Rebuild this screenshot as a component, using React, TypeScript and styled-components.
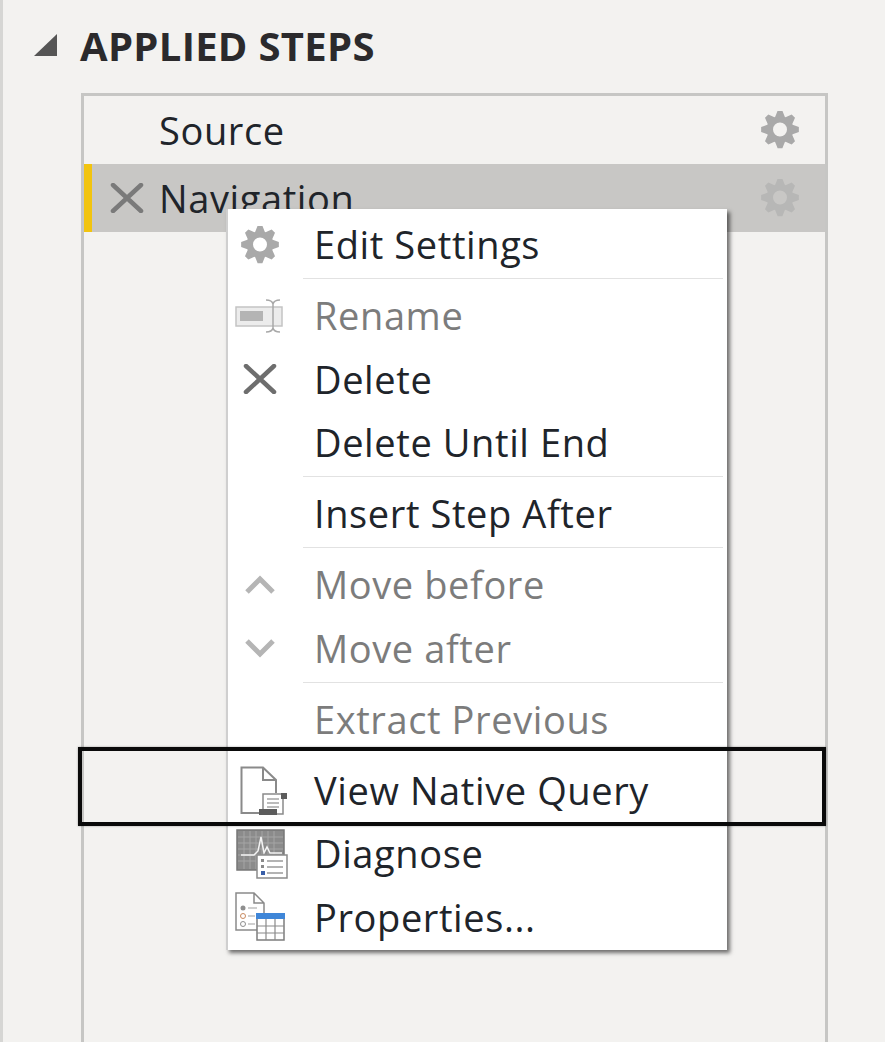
import React from 'react';
import styled, { createGlobalStyle } from 'styled-components';

const GlobalStyle = createGlobalStyle`
  html, body {
    margin: 0;
    padding: 0;
    background: #f3f2f0;
  }
  body {
    font-family: 'Open Sans', 'Noto Sans', 'Liberation Sans', sans-serif;
  }
`;

const Panel = styled.div`
  position: relative;
  box-sizing: border-box;
  width: 885px;
  height: 1042px;
  overflow: hidden;
  border-left: 3px solid #d6d6d4;
  background: #f3f2f0;
  display: flex;
  flex-direction: column;
`;

const Header = styled.div`
  display: flex;
  align-items: center;
  height: 46px;
  margin-top: 23px;
  padding-left: 30px;
  gap: 22px;
`;

const Title = styled.h2`
  margin: 0;
  font-size: 40px;
  line-height: 46px;
  font-weight: 700;
  letter-spacing: 0.3px;
  color: #2b2a2c;
`;

const StepsBox = styled.div`
  position: relative;
  box-sizing: border-box;
  flex: 1;
  margin: 24px 57px 0 78px;
  border: 3px solid #c6c6c4;
  border-bottom: 0;
`;

const StepRow = styled.div<{ $active?: boolean }>`
  box-sizing: border-box;
  height: 68px;
  display: flex;
  align-items: center;
  padding-left: ${(p) => (p.$active ? '17px' : '25px')};
  padding-right: 26px;
  background: ${(p) => (p.$active ? '#c8c7c5' : 'transparent')};
  border-left: ${(p) => (p.$active ? '8px solid #f2c40f' : '0')};
`;

const StepIcon = styled.div`
  width: 50px;
  display: flex;
  align-items: center;
`;

const StepLabel = styled.span`
  flex: 1;
  font-size: 38px;
  line-height: 68px;
  letter-spacing: 0.6px;
  color: #20242a;
`;

const Menu = styled.div`
  position: absolute;
  left: 142px;
  top: 113px;
  box-sizing: border-box;
  width: 501px;
  padding: 4px 0 0;
  height: 741px;
  background: #ffffff;
  border-left: 2px solid #cfcfcf;
  box-shadow: 3px 3px 4px rgba(0, 0, 0, 0.55);
`;

const MenuRow = styled.div`
  height: 63.25px;
  display: flex;
  align-items: center;
`;

const MenuIcon = styled.div`
  width: 86px;
  flex: none;
  display: flex;
  justify-content: center;
  padding-right: 22px;
  box-sizing: border-box;
`;

const MenuLabel = styled.span<{ $disabled?: boolean }>`
  font-size: 38px;
  line-height: 63px;
  letter-spacing: 0.6px;
  white-space: nowrap;
  color: ${(p) => (p.$disabled ? '#7c7c7c' : '#20242a')};
`;

const Separator = styled.div<{ $hidden?: boolean }>`
  height: 1px;
  margin: 2px 4px 5px 75px;
  background: ${(p) => (p.$hidden ? 'transparent' : '#e2e2e2')};
`;

const Highlight = styled.div`
  position: absolute;
  left: 75px;
  top: 747px;
  box-sizing: border-box;
  width: 748px;
  height: 79px;
  border: 4px solid #0a0a0a;
  box-shadow: 0 0 2px rgba(0, 0, 0, 0.35);
`;

// builds an 8 tooth cog outline, hole is cut with evenodd
const gearPath = (cx: number, cy: number, outer: number, root: number, hole: number): string => {
  const pts: string[] = [];
  const teeth = 8;
  for (let i = 0; i < teeth; i += 1) {
    const a = (i * Math.PI * 2) / teeth - Math.PI / 2;
    const step = Math.PI / teeth;
    const list: [number, number][] = [
      [a - step * 0.92, root],
      [a - step * 0.32, outer],
      [a + step * 0.32, outer],
      [a + step * 0.92, root],
    ];
    list.forEach(([ang, r]) => {
      pts.push(`${(cx + Math.cos(ang) * r).toFixed(2)} ${(cy + Math.sin(ang) * r).toFixed(2)}`);
    });
  }
  const ring = `M${cx - hole} ${cy}a${hole} ${hole} 0 1 0 ${hole * 2} 0a${hole} ${hole} 0 1 0 ${-hole * 2} 0Z`;
  return `M${pts.join('L')}Z${ring}`;
};

const Gear = ({ color }: { color: string }) => (
  <svg width="38" height="38" viewBox="0 0 38 38">
    <path d={gearPath(19, 18.5, 19, 13.5, 7)} fill={color} fillRule="evenodd" />
  </svg>
);

const Cross = ({ color }: { color: string }) => (
  <svg width="36" height="30" viewBox="0 0 36 30">
    <path d="M4 2 L32 28 M32 2 L4 28" stroke={color} strokeWidth="4.5" strokeLinecap="round" fill="none" />
  </svg>
);

const Triangle = () => (
  <svg width="25" height="25" viewBox="0 0 25 25">
    <path d="M24 0 V22 H1 Z" fill="#555555" />
  </svg>
);

const RenameIcon = () => (
  <svg width="50" height="34" viewBox="0 0 50 34">
    <rect x="1" y="8" width="46" height="19" fill="#ececec" stroke="#c4c4c4" strokeWidth="1.5" />
    <rect x="5" y="12" width="23" height="10" fill="#b4b4b4" />
    <path d="M31 1 Q37 1 38 5 Q39 1 45 1 M38 5 V29 M31 33 Q37 33 38 29 Q39 33 45 33" stroke="#a8a8a8" strokeWidth="1.5" fill="none" />
  </svg>
);

const ChevronUp = () => (
  <svg width="32" height="22" viewBox="0 0 32 22">
    <path d="M3 18 L16 5 L29 18" stroke="#b5b5b5" strokeWidth="5" fill="none" />
  </svg>
);

const ChevronDown = () => (
  <svg width="32" height="22" viewBox="0 0 32 22">
    <path d="M3 4 L16 17 L29 4" stroke="#b5b5b5" strokeWidth="5" fill="none" />
  </svg>
);

const NativeQueryIcon = () => (
  <svg width="56" height="50" viewBox="-8 0 56 50">
    <path d="M21 47 H1.5 V1.5 H23 L36 14 V27 M23 1.5 V14 H36" stroke="#8a8a8a" strokeWidth="2" fill="none" />
    <rect x="23" y="28" width="20" height="20" fill="#fff" stroke="#8a8a8a" strokeWidth="1.5" />
    <path d="M27 33 H39 M27 37 H39 M27 41 H39" stroke="#a5a5a5" strokeWidth="1.5" />
    <rect x="19" y="43" width="18" height="6" fill="#5c5c5c" />
    <rect x="41" y="27" width="6" height="6" fill="#5c5c5c" />
  </svg>
);

const DiagnoseIcon = () => (
  <svg width="56" height="50" viewBox="-4 0 56 50">
    <rect x="1" y="1" width="47" height="40" fill="#8b8b8b" stroke="#777" strokeWidth="1.5" />
    <path d="M2 8 H47 M2 14 H47 M2 20 H47 M2 26 H47 M2 32 H47 M8 2 V40 M14 2 V40 M20 2 V40 M26 2 V40 M32 2 V40 M38 2 V40" stroke="#a5a5a5" strokeWidth="1" />
    <path d="M5 26 H18 L22 22 L25 8 L28 24 L31 18 L34 24 H46" stroke="#f4f4f4" strokeWidth="1.5" fill="none" />
    <rect x="21" y="26" width="30" height="23" fill="#fff" stroke="#8a8a8a" strokeWidth="1.5" />
    <path d="M31 32 H47 M31 38 H47 M31 44 H47" stroke="#9a9a9a" strokeWidth="1.5" />
    <rect x="25" y="30" width="3" height="3" fill="#8a8a8a" />
    <rect x="25" y="36" width="3" height="3" fill="#8a8a8a" />
    <rect x="25" y="42" width="4" height="4" fill="#3a5fa8" />
  </svg>
);

const PropertiesIcon = () => (
  <svg width="50" height="50" viewBox="0 0 50 50">
    <path d="M22 38 H1 V1 H19 L29 11 V21 M19 1 V11 H29" stroke="#8a8a8a" strokeWidth="1.5" fill="none" />
    <circle cx="8" cy="16" r="2.5" fill="#8f8f8f" />
    <circle cx="8" cy="24" r="2.5" fill="#fff" stroke="#c98a60" strokeWidth="1" />
    <circle cx="8" cy="32" r="2.5" fill="#fff" stroke="#8f8f8f" strokeWidth="1" />
    <path d="M13 16 H22 M13 24 H20 M13 32 H20" stroke="#a0a0a0" strokeWidth="1.2" />
    <rect x="22" y="22" width="27" height="26" fill="#fff" stroke="#7d7d7d" strokeWidth="1.5" />
    <rect x="21" y="21" width="29" height="6" fill="#3f86d8" />
    <path d="M31 27 V48 M40 27 V48 M22 34 H49 M22 41 H49" stroke="#8a8a8a" strokeWidth="1.2" />
  </svg>
);

const ActionsMenu = () => (
  <Menu>
    <MenuRow>
      <MenuIcon><Gear color="#a9a9a9" /></MenuIcon>
      <MenuLabel>Edit Settings</MenuLabel>
    </MenuRow>
    <Separator />
    <MenuRow>
      <MenuIcon><RenameIcon /></MenuIcon>
      <MenuLabel $disabled>Rename</MenuLabel>
    </MenuRow>
    <MenuRow>
      <MenuIcon><Cross color="#6e6e6e" /></MenuIcon>
      <MenuLabel>Delete</MenuLabel>
    </MenuRow>
    <MenuRow>
      <MenuIcon />
      <MenuLabel>Delete Until End</MenuLabel>
    </MenuRow>
    <Separator />
    <MenuRow>
      <MenuIcon />
      <MenuLabel>Insert Step After</MenuLabel>
    </MenuRow>
    <Separator />
    <MenuRow>
      <MenuIcon><ChevronUp /></MenuIcon>
      <MenuLabel $disabled>Move before</MenuLabel>
    </MenuRow>
    <MenuRow>
      <MenuIcon><ChevronDown /></MenuIcon>
      <MenuLabel $disabled>Move after</MenuLabel>
    </MenuRow>
    <Separator />
    <MenuRow>
      <MenuIcon />
      <MenuLabel $disabled>Extract Previous</MenuLabel>
    </MenuRow>
    <Separator $hidden />
    <MenuRow>
      <MenuIcon><NativeQueryIcon /></MenuIcon>
      <MenuLabel>View Native Query</MenuLabel>
    </MenuRow>
    <MenuRow>
      <MenuIcon><DiagnoseIcon /></MenuIcon>
      <MenuLabel>Diagnose</MenuLabel>
    </MenuRow>
    <MenuRow>
      <MenuIcon><PropertiesIcon /></MenuIcon>
      <MenuLabel>Properties...</MenuLabel>
    </MenuRow>
  </Menu>
);

export default function App(): JSX.Element {
  return (
    <>
      <GlobalStyle />
      <Panel>
        <Header>
          <Triangle />
          <Title>APPLIED STEPS</Title>
        </Header>
        <StepsBox>
          <StepRow>
            <StepIcon />
            <StepLabel>Source</StepLabel>
            <Gear color="#a9a9a9" />
          </StepRow>
          <StepRow $active>
            <StepIcon><Cross color="#7a7a7a" /></StepIcon>
            <StepLabel>Navigation</StepLabel>
            <Gear color="#b7b7b6" />
          </StepRow>
          <ActionsMenu />
        </StepsBox>
        <Highlight />
      </Panel>
    </>
  );
}
